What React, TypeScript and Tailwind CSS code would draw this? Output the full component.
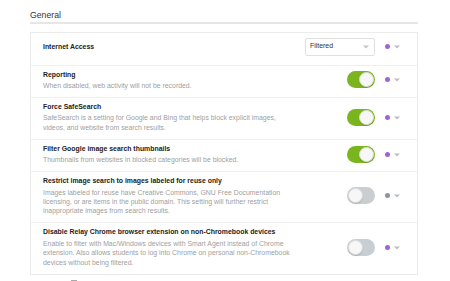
import React from "react";

const font = { fontFamily: '"Liberation Sans", Arial, Helvetica, sans-serif' };

function Toggle({ on }: { on: boolean }) {
  return (
    <div
      className={`relative w-[28px] h-[17px] rounded-full ${on ? "bg-[#7ab51d]" : "bg-[#c9ced2]"}`}
    >
      <div
        className={`absolute top-[1px] w-[15px] h-[15px] rounded-full bg-[#f7f7f7] border border-[#dcdcdc] shadow-[0_1px_1px_rgba(0,0,0,0.15)] ${on ? "right-[1px]" : "left-[1px]"}`}
      />
    </div>
  );
}

function Caret({ color = "#bdbdbd" }: { color?: string }) {
  return (
    <svg width="6" height="4" viewBox="0 0 6 4" className="block">
      <path d="M0 0.5 L6 0.5 L3 3.5 Z" fill={color} />
    </svg>
  );
}

function Controls({ children, dot }: { children: React.ReactNode; dot: string }) {
  return (
    <div className="flex items-center shrink-0">
      <div className="w-[70px] flex justify-end">{children}</div>
      <div className="ml-[10px] w-[5px] h-[5px] rounded-full" style={{ backgroundColor: dot }} />
      <div className="ml-[4px] mt-[1px]">
        <Caret />
      </div>
    </div>
  );
}

type Row = { title: string; desc: string[]; on: boolean; dot: string };

const rows: Row[] = [
  { title: "Reporting", desc: ["When disabled, web activity will not be recorded."], on: true, dot: "#a462d6" },
  {
    title: "Force SafeSearch",
    desc: [
      "SafeSearch is a setting for Google and Bing that helps block explicit images,",
      "videos, and website from search results.",
    ],
    on: true,
    dot: "#a462d6",
  },
  {
    title: "Filter Google image search thumbnails",
    desc: ["Thumbnails from websites in blocked categories will be blocked."],
    on: true,
    dot: "#a462d6",
  },
  {
    title: "Restrict image search to images labeled for reuse only",
    desc: [
      "Images labeled for reuse have Creative Commons, GNU Free Documentation",
      "licensing, or are items in the public domain. This setting will further restrict",
      "inappropriate images from search results.",
    ],
    on: false,
    dot: "#8c959d",
  },
  {
    title: "Disable Relay Chrome browser extension on non-Chromebook devices",
    desc: [
      "Enable to filter with Mac/Windows devices with Smart Agent instead of Chrome",
      "extension. Also allows students to log into Chrome on personal non-Chromebook",
      "devices without being filtered.",
    ],
    on: false,
    dot: "#a462d6",
  },
];

export default function App() {
  return (
    <div className="w-[450px] h-[281px] overflow-hidden bg-white" style={font}>
      <div className="ml-[30px] w-[388px] pt-[9px]">
        <div className="text-[8.7px] leading-[12px] text-[#333]">General</div>
        <div className="mt-[1px] h-[1.5px] bg-[#e6e6e6]" />
        <div className="mt-[8px] border border-[#ececec]">
          <div className="flex items-center justify-between pl-[12px] pr-[17px] pt-[5px] pb-[9px]">
            <div className="text-[6.9px] font-bold text-[#222] leading-[10px]">Internet Access</div>
            <Controls dot="#a462d6">
              <div className="w-[70px] h-[18px] border border-[#e0e0e0] rounded-[2px] flex items-center justify-between pl-[4px] pr-[5px] bg-white">
                <span className="text-[6.9px] text-[#333]">Filtered</span>
                <Caret color="#c4c4c4" />
              </div>
            </Controls>
          </div>
          {rows.map((r) => (
            <div
              key={r.title}
              className="flex items-center justify-between border-t border-[#efefef] pl-[12px] pr-[17px] pt-[4px] pb-[6.5px]"
            >
              <div className="flex flex-col">
                <div className="text-[6.9px] font-bold text-[#222] leading-[10px] whitespace-nowrap">{r.title}</div>
                <div className="mt-[1.5px] text-[6.9px] text-[#a0a0a0] leading-[9.4px] whitespace-nowrap">
                  {r.desc.map((d, i) => (
                    <div key={i}>{d}</div>
                  ))}
                </div>
              </div>
              <Controls dot={r.dot}>
                <Toggle on={r.on} />
              </Controls>
            </div>
          ))}
        </div>
        <div className="mt-[5px] flex items-start">
          <div className="ml-[7px] mt-[3px] w-[6px] h-[1px] bg-[#e4e4e4]" />
          <div className="ml-[28px] w-[6px] h-[6px] border border-[#a8a8a8]" />
        </div>
      </div>
    </div>
  );
}
